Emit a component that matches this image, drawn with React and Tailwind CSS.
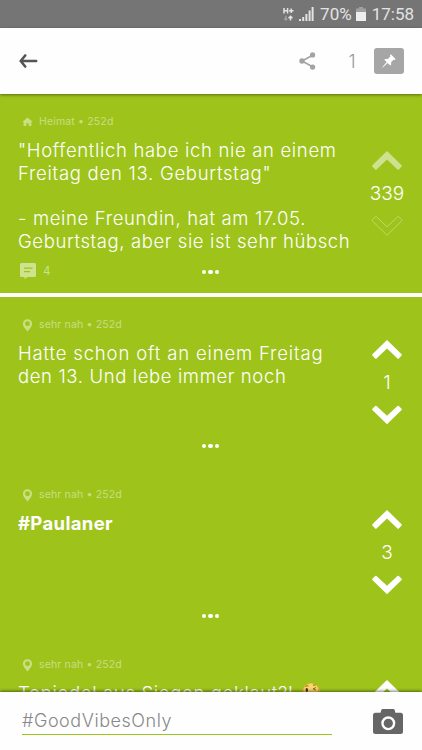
import React from 'react';

const posts = [
  {
    id: 1,
    place: 'Heimat',
    home: true,
    score: 339,
    voted: true,
    replies: 4,
    height: 'h-[199px]',
    lines: [
      { text: '"Hoffentlich habe ich nie an einem', style: 'tracking-[0.67px]' },
      { text: 'Freitag den 13. Geburtstag"', style: 'tracking-[0.73px]' },
      { text: '\u00a0', style: '' },
      { text: '- meine Freundin, hat am 17.05.', style: 'tracking-[0.65px]' },
      { text: 'Geburtstag, aber sie ist sehr hübsch', style: 'tracking-[0.6px]' },
    ],
  },
  {
    id: 2,
    place: 'sehr nah',
    score: 1,
    height: 'h-[170px]',
    lines: [
      { text: 'Hatte schon oft an einem Freitag', style: 'tracking-[0.84px]' },
      { text: 'den 13. Und lebe immer noch', style: 'tracking-[0.62px]' },
    ],
  },
  {
    id: 3,
    place: 'sehr nah',
    score: 3,
    height: 'h-[170px]',
    lines: [{ text: '#Paulaner', style: 'font-bold tracking-[0.35px]' }],
  },
  {
    id: 4,
    place: 'sehr nah',
    score: null,
    height: 'h-[170px]',
    emoji: true,
    lines: [{ text: 'Topjodel aus Siegen geklaut?!', style: 'tracking-[0.66px]' }],
  },
];

const HomeIcon = () => (
  <svg className="w-[11px] h-[10px]" viewBox="0 0 11 10" fill="currentColor">
    <path d="M5.5 0.4 10.8 5H9.4V9H6.7V6.2H4.3V9H1.6V5H0.2Z" />
  </svg>
);

const PinIcon = () => (
  <svg className="w-[11px] h-[13px]" viewBox="0 0 11 13" fill="currentColor">
    <path
      fillRule="evenodd"
      d="M5.5 0.2C8.2 0.2 10.1 2.2 10.1 4.7 10.1 7.4 7.7 9.8 5.5 12.6 3.3 9.8 0.9 7.4 0.9 4.7 0.9 2.2 2.8 0.2 5.5 0.2ZM5.5 2.3A2.4 2.4 0 1 0 5.5 7.1 2.4 2.4 0 1 0 5.5 2.3Z"
    />
  </svg>
);

const ArrowUp = ({ faded }) => (
  <svg className={faded ? 'w-8 h-5 opacity-50' : 'w-8 h-5'} viewBox="0 0 32 20" fill="#fff">
    <path d="M16 0 30.6 14.2Q31.2 14.9 30.6 15.5L27.8 18.4Q27.1 18.9 26.5 18.4L16 8.6 5.5 18.4Q4.9 18.9 4.2 18.4L1.4 15.5Q0.8 14.9 1.4 14.2Z" />
  </svg>
);

const ArrowDown = ({ outline }) => (
  <svg
    className={outline ? 'w-8 h-5 opacity-35' : 'w-8 h-5'}
    viewBox="0 0 32 20"
    fill={outline ? 'none' : '#fff'}
    stroke={outline ? '#fff' : 'none'}
  >
    <path d="M16 19.2 30.6 5Q31.2 4.3 30.6 3.7L27.8 0.9Q27.1 0.4 26.5 0.9L16 10.8 5.5 0.9Q4.9 0.4 4.2 0.9L1.4 3.7Q0.8 4.3 1.4 5Z" />
  </svg>
);

const Emoji = () => (
  <svg className="w-[18px] h-[18px] ml-[8px] mt-[1px] shrink-0" viewBox="0 0 18 18">
    <circle cx="9" cy="9" r="8.8" fill="#eeb53f" />
    <circle cx="9" cy="7.5" r="7" fill="#fbd66b" />
    <ellipse cx="4.8" cy="7" rx="1.2" ry="2" fill="#4a3210" />
    <path d="M11 5.8 14 4.6M11.2 5.9 14 7.2M3.2 3.6Q4.7 2.2 6.5 3M11 2.2 13.5 2" stroke="#8a5a18" strokeWidth="0.9" fill="none" />
    <path d="M5 12Q9 15 13 11" stroke="#6d4514" fill="none" />
  </svg>
);

const Post = ({ post }) => (
  <article className={`relative flex shrink-0 ${post.height}`}>
    <div className="flex-1 min-w-0 pt-[21px] pl-[18px]">
      <div className="flex items-center h-[14px] pl-1 text-white/45 text-[10.5px] tracking-[0.16px]">
        {post.home ? <HomeIcon /> : <PinIcon />}
        <span className="ml-[6px] whitespace-nowrap">{post.place} • 252d</span>
      </div>
      <div className="mt-[10px] text-[18.5px] leading-[22.7px] text-white font-light">
        {post.lines.map((line, i) => (
          <div key={i} className="flex whitespace-nowrap">
            <span className={line.style}>{line.text}</span>
            {post.emoji && <Emoji />}
          </div>
        ))}
      </div>
    </div>
    <div className="w-[70px] flex flex-col items-center justify-center">
      <ArrowUp faded={post.voted} />
      <span className="h-[45px] leading-[45px] text-[19px] font-light text-white">{post.score}</span>
      <ArrowDown outline={post.voted} />
    </div>
    {post.replies && (
      <div className="absolute left-[20px] bottom-[14px] flex items-center text-white/50 text-[11.5px]">
        <svg className="w-4 h-4" viewBox="0 0 16 16" fill="currentColor">
          <path
            fillRule="evenodd"
            d="M1.5 0H14.5Q16 0 16 1.5V12.5Q16 14 14.5 14H7.5L4.5 16V14H1.5Q0 14 0 12.5V1.5Q0 0 1.5 0ZM4 4.5V5.7H12.5V4.5ZM4 8V9.2H10V8Z"
          />
        </svg>
        <span className="ml-[7px] leading-4">{post.replies}</span>
      </div>
    )}
    <div className="absolute bottom-[19px] left-[202px] flex gap-[2px]">
      <i className="w-[4.4px] h-[4.4px] rounded-full bg-white" />
      <i className="w-[4.4px] h-[4.4px] rounded-full bg-white" />
      <i className="w-[4.4px] h-[4.4px] rounded-full bg-white" />
    </div>
  </article>
);

const StatusBar = () => (
  <div className="h-7 shrink-0 bg-[#757575] flex items-center justify-end pr-[8px] text-[#e3e3e3] font-['Roboto']">
    <svg className="w-[11px] h-[15px] mr-[5px]" viewBox="0 0 11 15" fill="none" stroke="currentColor" strokeWidth="1.5">
      <path d="M1 1V6.5M4.6 1V6.5M1 3.7H4.6M6 3.7H10.5M8.2 1.5V6" />
      <path d="M2.8 8.8V13M1.3 11.5 2.8 13 4.3 11.5" opacity="0.4" />
      <path d="M7.5 13.5V9.5M5.5 11.2 7.5 9.2 9.5 11.2" />
    </svg>
    <svg className="w-[15px] h-[14px] mr-[6px]" viewBox="0 0 15 14" fill="currentColor">
      <path d="M0 12H2V14H0ZM3.2 10H5.2V14H3.2ZM6.4 7H8.4V14H6.4ZM9.6 3.5H11.6V14H9.6ZM12.6 0H14.6V14H12.6Z" />
    </svg>
    <span className="text-[17px] leading-7">70%</span>
    <svg className="w-[10px] h-[14px] ml-[4px] mr-[6px]" viewBox="0 0 10 14">
      <path d="M3 0H7V1.5H10V5H0V1.5H3Z" fill="#a0a0a0" />
      <path d="M0 5H10V14H0Z" fill="#eeeeee" />
    </svg>
    <span className="text-[17px] leading-7">17:58</span>
  </div>
);

const Header = () => (
  <header className="relative z-10 h-[66px] shrink-0 bg-[#fefefe] flex items-center pl-[19px] pr-[18px] shadow-[0_1px_3px_rgba(0,0,0,0.45)]">
    <svg className="w-[19px] h-[14px]" viewBox="0 0 19 14" fill="none" stroke="#555" strokeWidth="2.6" strokeLinecap="round" strokeLinejoin="round">
      <path d="M6.2 1.5 1.7 7 6.2 12.5M2 7H17.2" />
    </svg>
    <svg className="w-[17px] h-[18px] ml-auto" viewBox="0 0 17 18" fill="#a3a3a3">
      <path d="M14 3 3 9 14 15" fill="none" stroke="#a3a3a3" strokeWidth="1.6" />
      <circle cx="13.6" cy="2.9" r="2.6" />
      <circle cx="3" cy="9" r="2.7" />
      <circle cx="13.6" cy="15.1" r="2.6" />
    </svg>
    <span className="w-[12px] ml-[30px] mr-px text-center text-[18px] font-light text-[#999]">1</span>
    <div className="w-[30px] h-[26px] ml-[15px] rounded-[3px] bg-[#a6a6a6] flex items-center justify-center">
      <svg className="w-[14px] h-[14px]" viewBox="0 0 14 14" fill="#fff">
        <path d="M8.8 0.3 13.6 5.1 12.8 5.9 11.6 5.7 9.1 8.2 9.2 10.8 8.2 11.6 5.6 8.9 0.8 13.6 0.3 13.2 4.7 8.1 2.3 5.8 3.2 4.9 5.8 5 8.3 2.4 8 1.1Z" />
      </svg>
    </div>
  </header>
);

const Composer = () => (
  <footer className="relative z-10 h-[58px] shrink-0 bg-[#fefefe] flex pl-[22px] shadow-[0_-1px_3px_rgba(0,0,0,0.5)]">
    <div className="w-[310px] h-[43px] border-b border-[#9cc51a] text-[18px] leading-[58px] font-light text-[#888] tracking-[0.55px]">
      #GoodVibesOnly
    </div>
    <svg className="w-[30px] h-[25px] ml-[41px] mt-[17px]" viewBox="0 0 30 25" fill="#666">
      <path
        fillRule="evenodd"
        d="M9.7 0H20.3Q21.4 0 21.8 1.2L22.4 3.8H27.5Q30 3.8 30 6.3V22.5Q30 25 27.5 25H2.5Q0 25 0 22.5V6.3Q0 3.8 2.5 3.8H7.6L8.2 1.2Q8.6 0 9.7 0ZM15.3 7.3A7 7 0 1 0 15.3 21.3 7 7 0 1 0 15.3 7.3Z"
      />
      <circle cx="15.3" cy="14.3" r="4.6" />
    </svg>
  </footer>
);

const App = () => {
  return (
    <div className="w-full h-screen flex flex-col overflow-hidden bg-[#9ec41c] font-['Inter',sans-serif]">
      <StatusBar />
      <Header />
      <main className="flex-1 min-h-0 overflow-hidden flex flex-col">
        <Post post={posts[0]} />
        <div className="h-1 shrink-0 bg-white" />
        {posts.slice(1).map((post) => (
          <Post key={post.id} post={post} />
        ))}
      </main>
      <Composer />
    </div>
  );
};

export default App;
